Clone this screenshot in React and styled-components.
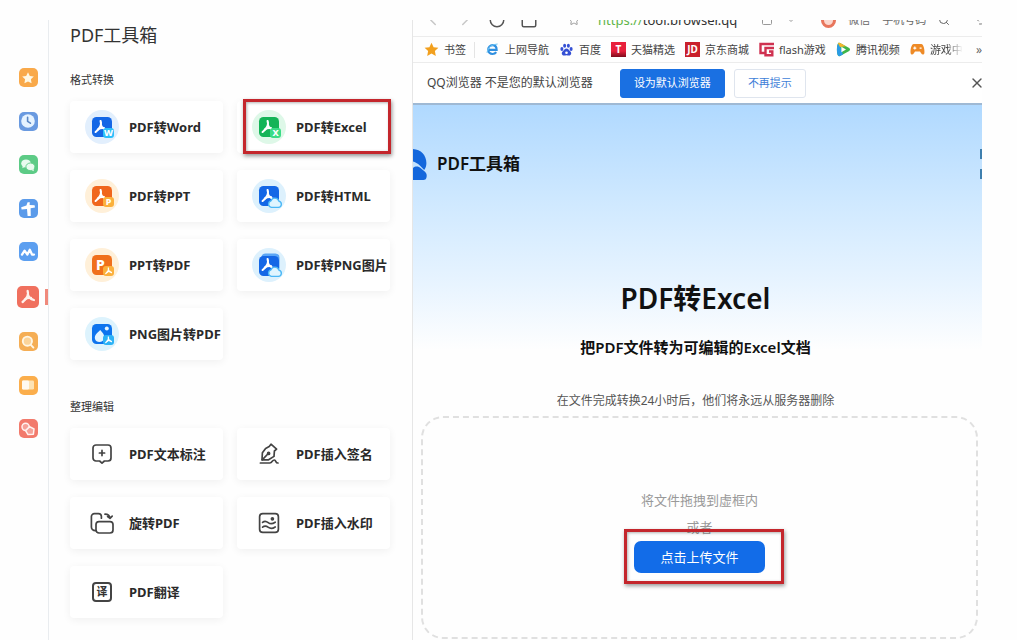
import React from 'react'
import styled, { createGlobalStyle } from 'styled-components'
import { ChevronLeft, ChevronRight, RotateCw, Square, Star, Search, X, ChevronDown, Undo2 } from 'lucide-react'

const navItems = [
  { id: 'star', label: '收藏', color: '#f9a94a' },
  { id: 'clock', label: '历史', color: '#6a9ae0' },
  { id: 'chat', label: '微信', color: '#5dcb86' },
  { id: 'plane', label: '翻译', color: '#5b9bea' },
  { id: 'wave', label: '网盘', color: '#5c9ff0' },
  { id: 'pdf', label: 'PDF工具箱', color: '#f0705e', active: true },
  { id: 'search', label: '搜索', color: '#f5ae55' },
  { id: 'book', label: '阅读', color: '#fbae4c' },
  { id: 'shapes', label: '图形', color: '#f27a6c' }
]

const convertTools = [
  { id: 'word', title: 'PDF转Word' },
  { id: 'excel', title: 'PDF转Excel', marked: true },
  { id: 'ppt', title: 'PDF转PPT' },
  { id: 'html', title: 'PDF转HTML' },
  { id: 'ppt2pdf', title: 'PPT转PDF' },
  { id: 'png', title: 'PDF转PNG图片' },
  { id: 'png2pdf', title: 'PNG图片转PDF' }
]

const editTools = [
  { id: 'note', title: 'PDF文本标注' },
  { id: 'sign', title: 'PDF插入签名' },
  { id: 'rotate', title: '旋转PDF' },
  { id: 'watermark', title: 'PDF插入水印' },
  { id: 'translate', title: 'PDF翻译' }
]

const toolColors = {
  word: { main: '#1467e6', badge: '#2cc0fa', halo: '#e2effd' },
  excel: { main: '#14b457', badge: '#3bdc86', halo: '#def8e8' },
  ppt: { main: '#f0661c', badge: '#fbb03c', halo: '#fff0d9' },
  html: { main: '#1467e6', badge: '#4cb8f6', halo: '#ddf1fd' },
  ppt2pdf: { main: '#f0701c', badge: '#fbb03c', halo: '#fff0d9' },
  png: { main: '#1467e6', badge: '#4cb8f6', halo: '#ddf1fd' },
  png2pdf: { main: '#0d74ee', badge: '#2cb2f6', halo: '#ddf3fd' }
}

const PdfMark = ({ stroke = '#fff', width = 2 }) => (
  <g fill='none' stroke={stroke} strokeWidth={width} strokeLinecap='round' strokeLinejoin='round'>
    <path d='M9.6 4c1.2 3-.2 7-5 11' />
    <path d='M9.9 7.6c.6 2.8 2.4 4.6 6 5.4' />
    <path d='M6.8 12.4c2.2-1.4 4.2-1.8 6.2-1.4' />
  </g>
)

const NavGlyph = ({ id }) => {
  switch (id) {
    case 'star':
      return <path fill='#fff8e4' d='M10 4.2l1.8 3.7 4 .6-2.9 2.8.7 4-3.6-1.9-3.6 1.9.7-4-2.9-2.8 4-.6z' />
    case 'clock':
      return (
        <g>
          <circle cx='10' cy='10' r='6.8' fill='#e6f3ff' />
          <path d='M9.6 6.2v4.2l2.8 1.8' fill='none' stroke='#5b87c4' strokeWidth='1.6' strokeLinecap='round' />
        </g>
      )
    case 'chat':
      return (
        <g fill='#e9fbef'>
          <ellipse cx='8' cy='8.4' rx='4.8' ry='4' />
          <path d='M4.8 10.6l-.4 2.6 2.6-1.4z' />
          <ellipse cx='12.4' cy='11.8' rx='4.5' ry='3.8' stroke='#5dcb86' strokeWidth='.9' />
          <path d='M13.4 15l2.4 1.2-.3-2.4z' />
        </g>
      )
    case 'plane':
      return <path fill='#fff' d='M3.2 9.2l5.2-1.8 1.2-3.2h2.2l-.2 2.8 5 .2.4 2.4-4.4.6.2 7.800H9.600l-.6-7-5.400.6z' />
    case 'wave':
      return (
        <path
          d='M4 12.6l2.6-4 2.8 4 2.4-4.8 2.2 4.8h2'
          fill='none'
          stroke='#fff'
          strokeWidth='2.3'
          strokeLinecap='round'
          strokeLinejoin='round'
        />
      )
    case 'pdf':
      return <PdfMark stroke='#fff1ec' width={2.3} />
    case 'search':
      return (
        <g fill='#fbd49a' stroke='#fff6e4' strokeWidth='1.9' strokeLinecap='round'>
          <circle cx='9.4' cy='9.2' r='4.6' />
          <path d='M12.8 12.8l2.6 2.8' />
        </g>
      )
    case 'book':
      return (
        <g>
          <rect x='4' y='5.4' width='12' height='9.2' rx='1.4' fill='#fde3b4' />
          <rect x='4' y='5.4' width='7' height='9.2' rx='1.4' fill='#fffaf0' />
        </g>
      )
    default:
      return (
        <g stroke='#fff2ef' strokeWidth='1.5' fill='#f5a198' strokeLinejoin='round'>
          <circle cx='7.6' cy='7.8' r='3.6' />
          <path d='M11.6 7.6l4.4 2.4-.6 5.2-5.4.4-2.4-4z' />
        </g>
      )
  }
}

const CloudBadge = ({ color }) => (
  <path
    d='M16.4 25.4h7a3.2 3.2 0 0 0 .5-6.3 4.2 4.2 0 0 0-7.9-.3 3.4 3.400 0 0 0 .4 6.600z'
    fill='#e0f5ff'
    stroke={color}
    strokeWidth='1.4'
  />
)

const ConvertIcon = ({ id }) => {
  const { main, badge } = toolColors[id]
  const isCloud = id === 'html' || id === 'png'
  const letter = { word: 'W', excel: 'X', ppt: 'P' }[id]
  return (
    <svg width='28' height='28' viewBox='0 0 28 28' aria-hidden='true'>
      {id === 'png' && <rect x='6.5' y='2.5' width='18' height='18' rx='4' fill='#5aa6f6' />}
      <rect x='4' y={id === 'png' ? 5 : 4} width='20' height='20' rx='4.5' fill={main} />
      {id === 'ppt2pdf' && (
        <text x='8' y='19' fontFamily='Noto Sans, sans-serif' fontSize='14' fontWeight='800' fill='#fff'>
          P
        </text>
      )}
      {id === 'png2pdf' && (
        <g>
          <circle cx='18.8' cy='8.6' r='2' fill='#e4f5ff' />
          <path d='M7 19c-.8-4 2-5.600 5.200-9 3 3.200 4.400 5 4 8-.4 2.600-2.400 4-4.800 4-2 0-4-1-4.400-3z' fill='#e4f5ff' />
        </g>
      )}
      {id !== 'ppt2pdf' && id !== 'png2pdf' && (
        <g transform='translate(3 4)'>
          <PdfMark width={2.1} />
        </g>
      )}
      {isCloud && <CloudBadge color={badge} />}
      {!isCloud && <rect x='15' y='15' width='11' height='10' rx='3' fill={badge} />}
      {letter && (
        <text
          x='20.5'
          y='23.2'
          textAnchor='middle'
          fontFamily='Noto Sans, sans-serif'
          fontSize='9'
          fontWeight='800'
          fill='#fff'
        >
          {letter}
        </text>
      )}
      {(id === 'ppt2pdf' || id === 'png2pdf') && (
        <g transform='translate(15.5 15) scale(.5)'>
          <PdfMark width={2.6} />
        </g>
      )}
    </svg>
  )
}

const EditIcon = ({ id }) => (
  <svg
    width='24'
    height='24'
    viewBox='0 0 24 24'
    fill='none'
    stroke='#444'
    strokeWidth='1.7'
    strokeLinecap='round'
    strokeLinejoin='round'
    aria-hidden='true'
  >
    {id === 'note' && (
      <g>
        <path d='M6 3h12a3 3 0 0 1 3 3v10a3 3 0 0 1-3 3h-3.6L12 21.2 9.6 19H6a3 3 0 0 1-3-3V6a3 3 0 0 1 3-3z' />
        <path d='M12 8.4v5.2M9.4 11h5.2' />
      </g>
    )}
    {id === 'sign' && (
      <g>
        <path d='M12.2 4.6l1.8-2.400 5.600 5-2.200 1.800-.4 5.400-5.400 3.400H5l.4-7 3.200-4.400z' />
        <path d='M5.2 17.800l5.600-5.800M3.400 21h9.400c2.600 0 2.400-3.200 4.600-3 1.800.2.8 3 3.600 3' />
        <circle cx='11.6' cy='11.4' r='1' />
      </g>
    )}
    {id === 'rotate' && (
      <g>
        <rect x='6' y='10.6' width='17' height='11.4' rx='3' />
        <path d='M5.4 19.6C3 19.6 1.400 18.200 1.400 16V5.600a3 3 0 0 1 3-3h4a3 3 0 0 1 3 3v1.600' />
        <path d='M15 3.200c3 0 4.600 1.200 5 4M17.600 5.600l2.400 1.800 2.200-2.200' />
      </g>
    )}
    {id === 'watermark' && (
      <g>
        <rect x='2.6' y='2.6' width='18.8' height='18.8' rx='3.2' />
        <circle cx='15.4' cy='7.8' r='1' fill='#444' />
        <path d='M5.600 11.400c2-1.800 3.600-1.400 5.600.2s4.400 1.400 7-.4M5.600 16.200c2-1.600 3.800-1.200 5.800.2s4.400 1.200 6.800-.4' />
      </g>
    )}
  </svg>
)

const BookmarkIcon = ({ id }) => (
  <svg width='15' height='15' viewBox='0 0 15 15' aria-hidden='true'>
    {id === 'star' && (
      <path fill='#f2a01e' d='M7.500.8l2.100 4.400 4.800.6-3.500 3.300.9 4.800-4.300-2.400-4.300 2.400.9-4.800L.6 5.800l4.800-.6z' />
    )}
    {id === 'e' && (
      <g fill='none'>
        <path
          d='M3.400 7.800h8.200c0-3-1.700-4.600-4-4.600S3.200 5 3.200 7.600s1.800 4.400 4.300 4.400c1.700 0 2.900-.7 3.700-1.900'
          stroke='#2f8fe0'
          strokeWidth='2.2'
        />
        <path d='M2 10.800C2.600 6 6 2.400 12.600 2' stroke='#6cc3f2' strokeWidth='1.1' />
      </g>
    )}
    {id === 'paw' && (
      <g fill='#3550d4'>
        <ellipse cx='2.9' cy='7' rx='1.5' ry='1.9' />
        <ellipse cx='5.6' cy='3.7' rx='1.5' ry='2' />
        <ellipse cx='9.4' cy='3.7' rx='1.5' ry='2' />
        <ellipse cx='12.1' cy='7' rx='1.5' ry='1.9' />
        <path d='M7.500 6.600c1.700 0 2.500 1.800 3.900 3 1.500 1.400.9 4-1.200 4-1.100 0-1.700-.3-2.700-.3s-1.600.3-2.700.3c-2.100 0-2.700-2.600-1.200-4 1.400-1.200 2.200-3 3.900-3z' />
        <circle cx='7.5' cy='10.8' r='1.3' fill='#fff' />
      </g>
    )}
    {id === 'flash' && (
      <path d='M15 2H1.500v9H6M15 6H6.500v7.200h6.800V9.500H10' fill='none' stroke='#cf3150' strokeWidth='2.4' />
    )}
    {id === 'play' && (
      <g>
        <path d='M2 1.400C2.600.6 4 .8 5 1.400l8.200 4.700c1.100.7 1.100 2.100 0 2.800L5 13.600c-1 .6-2.400.8-3 0C.6 11 .6 4 2 1.400z' fill='#3fb54a' />
        <path d='M2 1.400C.6 4 .6 11 2 13.600c.6.8 2 .6 3 0L7 12.400 4 4z' fill='#2a9be6' />
        <path d='M2 1.400C2.600.6 4 .8 5 1.400l5 2.900L4 5z' fill='#f6b62c' />
        <path d='M5.400 4.800v5.400l4.600-2.700z' fill='#fff' />
      </g>
    )}
    {id === 'game' && (
      <g>
        <path d='M3.800 2h7.400c2.600 0 3.600 6.400 3.200 9-.3 1.800-2.200 2-3.100.6L10 9.600H5l-1.300 2C2.800 13 .9 12.800.6 11 .2 8.400 1.200 2 3.800 2z' fill='#ee8a26' />
        <path d='M4.800 4.600v3M3.300 6.100h3M9.600 6.100h2' stroke='#fff' strokeWidth='1.1' />
      </g>
    )}
  </svg>
)

const ToolCard = ({ tool, children }) => (
  <Card type='button'>
    <CardIcon $halo={toolColors[tool.id] && toolColors[tool.id].halo}>{children}</CardIcon>
    <CardTitle>{tool.title}</CardTitle>
  </Card>
)

export default function App() {
  return (
    <Page>
      <GlobalStyle />
      <Sidebar>
        <NavList>
          {navItems.map(item => (
            <NavButton key={item.id} type='button' aria-label={item.label} $color={item.color} $active={item.active}>
              <svg width='20' height='20' viewBox='0 0 20 20' aria-hidden='true'>
                <NavGlyph id={item.id} />
              </svg>
            </NavButton>
          ))}
        </NavList>
      </Sidebar>

      <Panel>
        <PanelTitle>PDF工具箱</PanelTitle>
        <Section>
          <SectionTitle>格式转换</SectionTitle>
          <CardGrid>
            {convertTools.map(tool => (
              <CardCell key={tool.id}>
                <ToolCard tool={tool}>
                  <ConvertIcon id={tool.id} />
                </ToolCard>
                {tool.marked && <CardMarker />}
              </CardCell>
            ))}
          </CardGrid>
        </Section>
        <Section>
          <SectionTitle>整理编辑</SectionTitle>
          <CardGrid>
            {editTools.map(tool => (
              <CardCell key={tool.id}>
                <ToolCard tool={tool}>
                  {tool.id === 'translate' ? <TranslateIcon>译</TranslateIcon> : <EditIcon id={tool.id} />}
                </ToolCard>
              </CardCell>
            ))}
          </CardGrid>
        </Section>
      </Panel>

      <Browser>
        <Toolbar>
          <ToolbarRow>
            <ToolbarGroup $gap={14} $color='#c8c8c8'>
              <ChevronLeft size={18} />
              <ChevronRight size={18} />
              <RotateCw size={18} color='#555' />
              <Square size={18} color='#555' />
            </ToolbarGroup>
            <AddressBar>
              <Star size={12} color='#999' />
              <Address>
                <span>https://</span>tool.browser.qq
              </Address>
            </AddressBar>
            <ToolbarGroup $gap={12} $color='#999'>
              <Square size={12} />
              <ChevronDown size={12} />
            </ToolbarGroup>
            <SearchHint>
              <HotDot />
              <span>微信</span>
              <span>手机号码</span>
              <Search size={12} />
            </SearchHint>
            <Undo2 size={12} color='#777' />
          </ToolbarRow>
        </Toolbar>

        <Bookmarks>
          <Bookmark href='#' $divider>
            <BookmarkIcon id='star' />
            书签
          </Bookmark>
          <Bookmark href='#'>
            <BookmarkIcon id='e' />
            上网导航
          </Bookmark>
          <Bookmark href='#'>
            <BookmarkIcon id='paw' />
            百度
          </Bookmark>
          <Bookmark href='#'>
            <SiteBadge $bg='linear-gradient(#e8203c 60%, #7c0c1c)'>T</SiteBadge>
            天猫精选
          </Bookmark>
          <Bookmark href='#'>
            <SiteBadge $bg='#c9202c'>JD</SiteBadge>
            京东商城
          </Bookmark>
          <Bookmark href='#'>
            <BookmarkIcon id='flash' />
            flash游戏
          </Bookmark>
          <Bookmark href='#'>
            <BookmarkIcon id='play' />
            腾讯视频
          </Bookmark>
          <Bookmark href='#' $fade>
            <BookmarkIcon id='game' />
            游戏中
          </Bookmark>
          <More>»</More>
        </Bookmarks>

        <InfoBar>
          <InfoText>QQ浏览器 不是您的默认浏览器</InfoText>
          <InfoButton type='button' $primary>
            设为默认浏览器
          </InfoButton>
          <InfoButton type='button'>不再提示</InfoButton>
          <CloseButton type='button' aria-label='关闭'>
            <X size={16} strokeWidth={2} />
          </CloseButton>
        </InfoBar>

        <Content>
          <Brand>
            <svg width='14' height='32' viewBox='0 0 14 32' aria-hidden='true'>
              <path d='M0 1c8 .4 13.400 6.400 13.400 14 0 3-.8 5.200-2.200 7L6.800 17.600C4.800 15.600 2 14 0 13.600z' fill='#1467dc' />
              <path d='M0 20c2.200-2 5.600-2 7.800.2l4.200 3.600c2 1.800 2 4 1.400 6-.4 1.400-1.400 2.200-3 2.200H0z' fill='#1467dc' />
            </svg>
            <BrandName>PDF工具箱</BrandName>
            <EdgeMark width='2' height='30' viewBox='0 0 2 30' aria-hidden='true'>
              <path d='M1 0v10M1 20v10' stroke='#3f7fae' strokeWidth='2' />
            </EdgeMark>
          </Brand>
          <Heading>PDF转Excel</Heading>
          <SubHeading>把PDF文件转为可编辑的Excel文档</SubHeading>
          <Note>在文件完成转换24小时后，他们将永远从服务器删除</Note>
          <DropZone>
            <DropHint>
              <p>将文件拖拽到虚框内</p>
              <p>或者</p>
            </DropHint>
            <UploadWrapper>
              <UploadButton type='button'>点击上传文件</UploadButton>
              <UploadMarker />
            </UploadWrapper>
          </DropZone>
        </Content>
      </Browser>
    </Page>
  )
}

const GlobalStyle = createGlobalStyle`
  * {
    box-sizing: border-box;
  }
  body {
    margin: 0;
    background: #fefefe;
    color: #222;
    font-family: "Noto Sans", "Noto Sans CJK SC", sans-serif;
  }
  button {
    font-family: inherit;
    cursor: pointer;
  }
  svg {
    display: block;
    flex: none;
  }
  h1, h2, h3, p {
    margin: 0;
  }
`
const Page = styled.div`
  display: grid;
  grid-template-columns: 49px 363px minmax(0, 1fr);
  min-height: 100vh;
  padding: 20px 35px 0 0;
`
const Sidebar = styled.nav`
  border-right: 1px solid #e9ecef;
  padding-top: 48px;
`
const NavList = styled.div`
  display: flex;
  flex-direction: column;
  justify-content: space-between;
  align-items: center;
  height: 370px;
  padding-left: 8px;
`
const NavButton = styled.button`
  position: relative;
  display: flex;
  align-items: center;
  justify-content: center;
  width: ${props => props.$active ? '22px' : '19px'};
  height: ${props => props.$active ? '22px' : '19px'};
  padding: 0;
  border: 0;
  border-radius: 5px;
  background: ${props => props.$color};
  &::after {
    content: '';
    display: ${props => props.$active ? 'block' : 'none'};
    position: absolute;
    right: -9px;
    top: 3px;
    width: 3px;
    height: 16px;
    background: #f08a7c;
  }
`
const Panel = styled.section`
  padding: 0 22px 0 21px;
`
const PanelTitle = styled.h1`
  font-size: 18px;
  font-weight: 400;
  line-height: 30px;
  color: #333;
`
const Section = styled.div`
  padding-top: 20px;
  & + & {
    padding-top: 37px;
  }
`
const SectionTitle = styled.h2`
  font-size: 11px;
  font-weight: 400;
  line-height: 20px;
  color: #333;
  margin-bottom: 11px;
`
const CardGrid = styled.div`
  display: grid;
  grid-template-columns: 1fr 1fr;
  gap: 17px 14px;
`
const CardCell = styled.div`
  position: relative;
  min-width: 0;
`
const Card = styled.button`
  display: flex;
  align-items: center;
  gap: 10px;
  width: 100%;
  height: 52px;
  padding: 0 0 0 15px;
  overflow: hidden;
  border: 0;
  border-radius: 4px;
  background: #fff;
  box-shadow: 0 2px 8px rgba(0, 0, 0, 0.06);
`
const CardIcon = styled.span`
  display: flex;
  align-items: center;
  justify-content: center;
  flex: none;
  width: 34px;
  height: 34px;
  border-radius: 50%;
  background: ${props => props.$halo || 'none'};
`
const CardTitle = styled.span`
  font-size: 13px;
  font-weight: 700;
  line-height: 20px;
  color: #2a2a2a;
  white-space: nowrap;
`
const Marker = styled.div`
  position: absolute;
  border: 3px solid #c4262c;
  box-shadow: 1px 2px 4px rgba(0, 0, 0, 0.4), inset 1px 1px 3px rgba(0, 0, 0, 0.3);
  pointer-events: none;
`
const CardMarker = styled(Marker)`
  inset: -2px -1px -1px 6px;
`
const TranslateIcon = styled.span`
  display: flex;
  align-items: center;
  justify-content: center;
  width: 20px;
  height: 20px;
  border: 2px solid #444;
  border-radius: 4px;
  font-size: 11px;
  font-weight: 600;
  line-height: 12px;
  color: #333;
`
const Browser = styled.main`
  display: flex;
  flex-direction: column;
  min-width: 0;
  border-left: 1px solid #e6e6e6;
`
const Toolbar = styled.div`
  display: flex;
  align-items: flex-end;
  height: 17px;
  overflow: hidden;
  border-bottom: 1px solid #ececec;
`
const ToolbarRow = styled.div`
  display: flex;
  align-items: center;
  flex: 1;
  gap: 24px;
  height: 32px;
  padding-left: 11px;
`
const ToolbarGroup = styled.div`
  display: flex;
  align-items: center;
  gap: ${props => props.$gap}px;
  color: ${props => props.$color};
`
const AddressBar = styled.div`
  display: flex;
  align-items: center;
  flex: 1;
  gap: 18px;
  padding-left: 6px;
`
const Address = styled.div`
  font-size: 13px;
  line-height: 20px;
  color: #333;
  white-space: nowrap;
  span {
    color: #5fb548;
  }
`
const SearchHint = styled.div`
  display: flex;
  align-items: center;
  gap: 12px;
  font-size: 11px;
  line-height: 20px;
  color: #666;
  white-space: nowrap;
`
const HotDot = styled.span`
  width: 15px;
  height: 15px;
  border: 3px solid #e8765c;
  border-radius: 50%;
  background: #fbd8cf;
`
const Bookmarks = styled.div`
  display: flex;
  align-items: center;
  gap: 10px;
  height: 26px;
  padding-left: 11px;
  overflow: hidden;
  border-bottom: 1px solid #ececec;
`
const Bookmark = styled.a`
  display: flex;
  align-items: center;
  gap: 5px;
  flex: none;
  padding-right: ${props => props.$divider ? '8px' : 0};
  border-right: ${props => props.$divider ? '1px solid #e4e4e4' : 0};
  font-size: 11px;
  line-height: 16px;
  color: #444;
  text-decoration: none;
  mask-image: ${props => props.$fade ? 'linear-gradient(90deg, #000 70%, transparent)' : 'none'};
`
const SiteBadge = styled.span`
  display: flex;
  align-items: center;
  justify-content: center;
  width: 15px;
  height: 15px;
  background: ${props => props.$bg};
  font-size: 10px;
  font-weight: 700;
  line-height: 15px;
  color: #fff;
`
const More = styled.span`
  flex: none;
  margin-left: auto;
  font-size: 12px;
  line-height: 16px;
  color: #666;
`
const InfoBar = styled.div`
  display: flex;
  align-items: center;
  height: 40px;
  padding-left: 14px;
  background: #fff;
`
const InfoText = styled.span`
  margin-right: 27px;
  font-size: 12px;
  line-height: 20px;
  color: #444;
  white-space: nowrap;
`
const InfoButton = styled.button`
  height: 29px;
  margin-right: 9px;
  padding: 0 13px;
  border: 1px solid ${props => props.$primary ? '#1a70e2' : '#dfe5ee'};
  border-radius: 3px;
  background: ${props => props.$primary ? '#1a70e2' : '#fff'};
  font-size: 11px;
  line-height: 16px;
  color: ${props => props.$primary ? '#fff' : '#3f7fd8'};
  white-space: nowrap;
`
const CloseButton = styled.button`
  display: flex;
  margin: 0 -3px 0 auto;
  padding: 0;
  border: 0;
  background: none;
  color: #555;
`
const Content = styled.div`
  display: flex;
  flex-direction: column;
  flex: 1;
  padding: 43px 4px 0 0;
  background: linear-gradient(#b0d9ff, #d0e9ff 100px, #e8f4ff 180px, #fefefe 245px);
  border-top: 2px solid #9fb9d4;
`
const Brand = styled.div`
  display: flex;
  align-items: center;
  gap: 10px;
  margin-right: -4px;
`
const BrandName = styled.span`
  font-size: 17px;
  font-weight: 600;
  line-height: 30px;
  color: #111;
`
const EdgeMark = styled.svg`
  margin-left: auto;
`
const Heading = styled.h1`
  margin-top: 98px;
  font-size: 28px;
  font-weight: 600;
  line-height: 40px;
  color: #111;
  text-align: center;
`
const SubHeading = styled.h2`
  margin-top: 19px;
  font-size: 15px;
  font-weight: 600;
  line-height: 20px;
  color: #111;
  text-align: center;
`
const Note = styled.p`
  margin-top: 34px;
  font-size: 12px;
  line-height: 20px;
  color: #555;
  text-align: center;
`
const DropZone = styled.div`
  display: flex;
  flex-direction: column;
  align-items: center;
  gap: 4px;
  margin: 5px 0 0 8px;
  padding: 72px 0 64px;
  border: 2px dashed #e0e0e0;
  border-radius: 22px;
`
const DropHint = styled.div`
  display: flex;
  flex-direction: column;
  align-items: center;
  gap: 7px;
  font-size: 13px;
  line-height: 20px;
  color: #999;
`
const UploadWrapper = styled.div`
  position: relative;
`
const UploadButton = styled.button`
  height: 32px;
  padding: 0 26px;
  border: 0;
  border-radius: 7px;
  background: #126ce8;
  font-size: 13px;
  line-height: 20px;
  color: #fff;
`
const UploadMarker = styled(Marker)`
  inset: -12px -19px -11px -10px;
`
